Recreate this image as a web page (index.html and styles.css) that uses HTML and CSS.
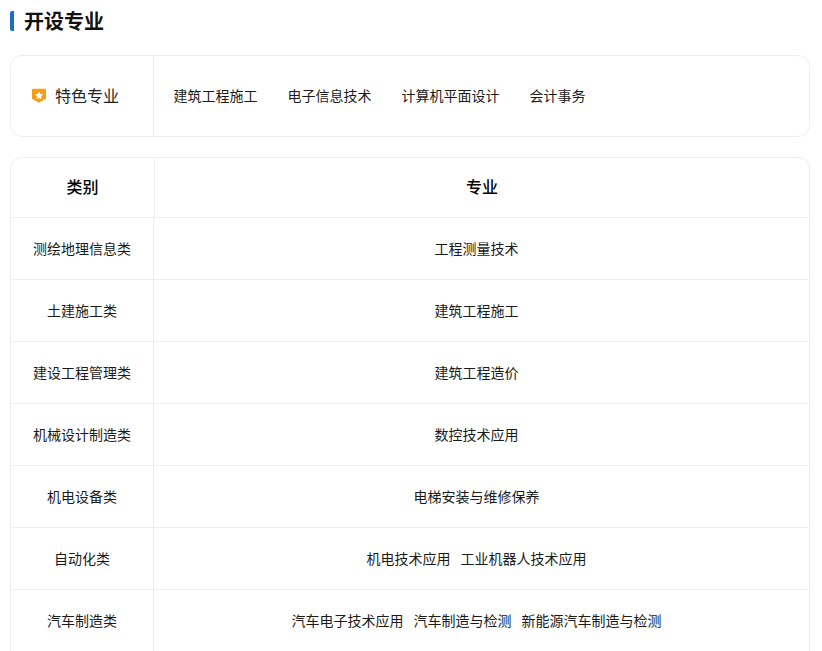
FILE: index.html
```html
<!DOCTYPE html>
<html lang="zh-CN">
<head>
<meta charset="utf-8">
<title>开设专业</title>
<link rel="stylesheet" href="styles.css">
</head>
<body>
<main class="page">
  <h2 class="title">开设专业</h2>
  <section class="featured">
    <div class="featured-label">
      <svg class="badge" width="16" height="16" viewBox="0 0 16 16" aria-hidden="true">
        <path d="M2 .7h12a1 1 0 0 1 1 1v8.600a1 1 0 0 1-.5.8L8 14.700l-6.500-3.600a1 1 0 0 1-.5-.8V1.700a1 1 0 0 1 1-1z" fill="#f89c14"/>
        <path d="M8 3.500l1.300 2.600 2.800.4-2 2 .5 2.800L8 10l-2.600 1.300.5-2.800-2-2 2.800-.4z" fill="#fff"/>
      </svg>
      <span class="featured-name">特色专业</span>
    </div>
    <ul class="featured-list">
      <li>建筑工程施工</li>
      <li>电子信息技术</li>
      <li>计算机平面设计</li>
      <li>会计事务</li>
    </ul>
  </section>
  <section class="table">
    <div class="row head">
      <div class="cat">类别</div>
      <div class="major">专业</div>
    </div>
    <div class="row"><div class="cat">测绘地理信息类</div><div class="major"><span>工程测量技术</span></div></div>
    <div class="row"><div class="cat">土建施工类</div><div class="major"><span>建筑工程施工</span></div></div>
    <div class="row"><div class="cat">建设工程管理类</div><div class="major"><span>建筑工程造价</span></div></div>
    <div class="row"><div class="cat">机械设计制造类</div><div class="major"><span>数控技术应用</span></div></div>
    <div class="row"><div class="cat">机电设备类</div><div class="major"><span>电梯安装与维修保养</span></div></div>
    <div class="row"><div class="cat">自动化类</div><div class="major"><span>机电技术应用</span><span>工业机器人技术应用</span></div></div>
    <div class="row"><div class="cat">汽车制造类</div><div class="major"><span>汽车电子技术应用</span><span>汽车制造与检测</span><span>新能源汽车制造与检测</span></div></div>
  </section>
</main>
</body>
</html>
```
FILE: styles.css
```css
html, body {
  margin: 0;
  padding: 0;
  background: #fff;
  overflow: hidden;
  height: 651px;
}
body {
  font-family: "Noto Sans CJK SC", "Liberation Sans", sans-serif;
  color: #1a1a1a;
}
.page {
  width: 800px;
  padding: 11px 0 0 10px;
}
.title {
  margin: 0 0 24px;
  height: 20px;
  line-height: 20px;
  padding-left: 10px;
  border-left: 4px solid #1a6fc4;
  border-radius: 2px;
  font-size: 20px;
  font-weight: 700;
  color: #111;
}
.featured {
  display: flex;
  height: 80px;
  border: 1px solid #eee;
  border-radius: 12px;
  margin-bottom: 20px;
}
.featured-label {
  width: 142px;
  border-right: 1px solid #eee;
  display: flex;
  align-items: center;
  gap: 8px;
  font-size: 16px;
  color: #222;
}
.featured-name {
  padding-bottom: 2px;
}
.badge {
  margin-left: 20px;
  flex: none;
}
.featured-list {
  list-style: none;
  margin: 0;
  padding: 0 0 2px 19.5px;
  display: flex;
  align-items: center;
  gap: 30px;
  font-size: 14px;
}
.table {
  border: 1px solid #eee;
  border-bottom: 0;
  border-radius: 12px 12px 0 0;
}
.row {
  display: flex;
  height: 61px;
  border-bottom: 1px solid #eee;
  font-size: 14px;
  text-align: center;
}
.row > div {
  display: flex;
  align-items: center;
  justify-content: center;
  padding-bottom: 2px;
  box-sizing: border-box;
}
.cat {
  width: 143px;
  border-right: 1px solid #eee;
  flex: none;
}
.major {
  flex: 1;
  gap: 10px;
  padding-right: 10px;
}
.head {
  height: 59px;
  font-size: 16px;
  font-weight: 500;
  color: #000;
}
.row.head > div {
  padding-bottom: 4px;
}
.head .cat {
  width: 144px;
}
.head .major {
  padding-right: 0;
}
```
